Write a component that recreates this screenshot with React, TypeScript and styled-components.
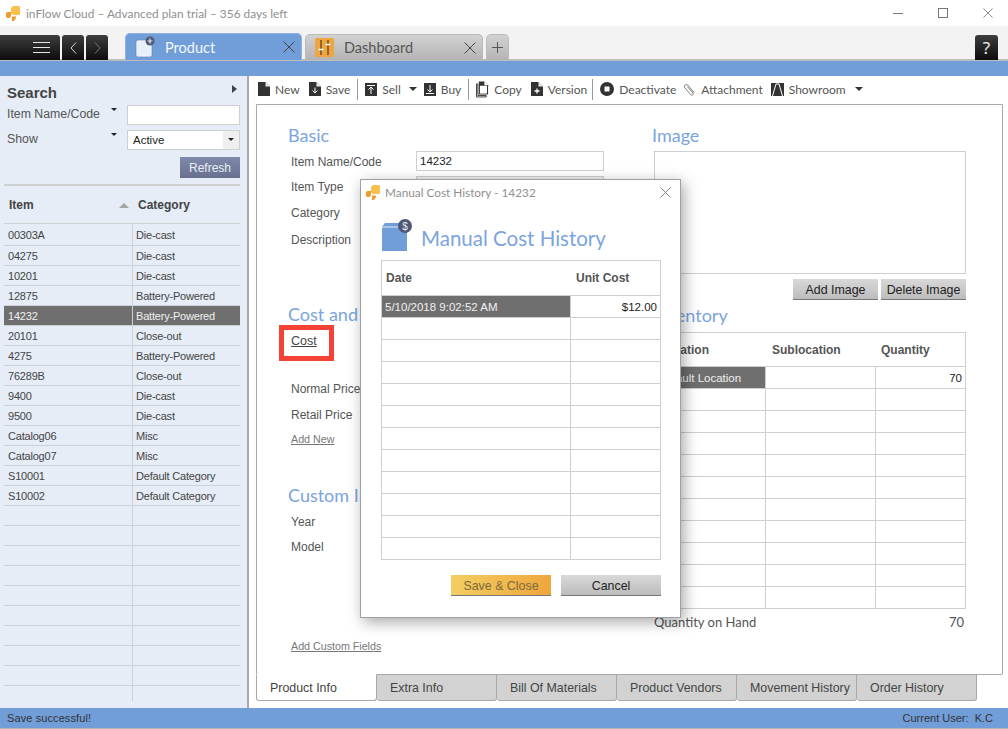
import React from "react";
import styled, { createGlobalStyle } from "styled-components";

const Global = createGlobalStyle`
  html, body { margin: 0; padding: 0; background: #fff; }
  *, *::before, *::after { box-sizing: border-box; }
  body { font-family: "Liberation Sans", Arial, sans-serif; }
`;

const UI = `"Lato", "Noto Sans", sans-serif`;

const AppFrame = styled.div`
  position: relative; width: 1008px; height: 729px; overflow: hidden;
  display: flex; flex-direction: column; background: #fff; color: #444;
`;

/* ---------- title bar ---------- */
const TitleBar = styled.header`
  height: 26px; flex: none; display: flex; align-items: center; padding-left: 6px;
  background: #fff;
`;
const TitleText = styled.span`
  margin-left: 6px; font: 11.9px ${UI}; color: #8f8f8f; white-space: nowrap;
`;
const WindowControls = styled.div`
  margin-left: auto; display: flex; align-items: center; padding-right: 15px; gap: 35px; color: #777;
`;

/* ---------- tab strip ---------- */
const TabStrip = styled.nav`
  height: 35px; flex: none; display: flex; align-items: flex-end; background: #f3f3f3;
  border-bottom: 2px solid #bdbdbd; padding-top: 9px;
`;
const DarkButton = styled.button<{ $w: number; $ml?: number; $dim?: boolean }>`
  width: ${(p) => p.$w}px; height: 25px; margin-left: ${(p) => p.$ml ?? 2}px; margin-bottom: -1px;
  border: 0; padding: 0; border-radius: 3px 3px 0 0;
  background: linear-gradient(#3d3d3d, #0d0d0d);
  color: ${(p) => (p.$dim ? "#777" : "#ddd")};
  display: flex; align-items: center; justify-content: center;
  font: 18px "Noto Sans", sans-serif;
`;
const MenuButton = styled(DarkButton)`
  justify-content: flex-end; padding-right: 10px; border-radius: 0 3px 0 0;
`;
const DocTab = styled.div<{ $active?: boolean; $w: number; $ml: number }>`
  width: ${(p) => p.$w}px; height: ${(p) => (p.$active ? 27 : 26)}px; margin-left: ${(p) => p.$ml}px;
  margin-bottom: -1px; flex: none; position: relative; z-index: 1;
  display: flex; align-items: center; padding-left: 9px;
  border-radius: 5px 5px 0 0; border: 1px solid ${(p) => (p.$active ? "#8fb2e0" : "#bbb")};
  border-bottom: 0;
  background: ${(p) => (p.$active ? "#719ed9" : "linear-gradient(#d2d2d2, #b4b4b4)")};
  color: ${(p) => (p.$active ? "#f4f8ff" : "#555")};
  font: 14.5px ${UI};
`;
const DocTabLabel = styled.span<{ $gap: number }>` margin-left: ${(p) => p.$gap}px; `;
const DocTabClose = styled.span`
  margin-left: auto; margin-right: 6px; display: flex; color: #444;
`;
const PlusTab = styled(DocTab)`
  padding: 0; justify-content: center; color: #555;
`;
const HelpButton = styled(DarkButton)`
  margin-left: auto; margin-right: 10px; font-size: 17px; color: #eee;
`;

const BlueBand = styled.div` height: 15px; flex: none; background: #719ed9; `;

/* ---------- main ---------- */
const Main = styled.div` flex: 1; min-height: 0; display: flex; `;

const Sidebar = styled.aside`
  width: 249px; flex: none; background: #e6edf7; border-right: 2px solid #a9a9a9;
  display: flex; flex-direction: column; padding: 0 7px 0 4px; position: relative;
`;
const SearchHead = styled.div`
  height: 26px; display: flex; align-items: flex-end; justify-content: space-between; padding: 0 0 1px 3px;
  font: bold 15px "Liberation Sans", sans-serif; color: #444;
`;
const CollapseArrow = styled.span`
  position: absolute; right: 10px; top: 9px; width: 0; height: 0;
  border-left: 5px solid #444; border-top: 4.5px solid transparent; border-bottom: 4.5px solid transparent;
`;
const SearchRow = styled.div`
  height: 25px; display: flex; align-items: center; padding-left: 3px;
  font-size: 12.3px; color: #555;
`;
const SearchLabel = styled.span`
  width: 120px; flex: none; position: relative; margin-top: -2px;
`;
const TinyCaret = styled.i`
  position: absolute; left: 104px; top: 1px; width: 0; height: 0;
  border-top: 3px solid #222; border-left: 3px solid transparent; border-right: 3px solid transparent;
`;
const FieldBox = styled.div`
  width: 113px; height: 20px; background: #fff; border: 1px solid #cfcfcf;
  display: flex; align-items: center; padding-left: 5px; color: #222; font-size: 11.5px;
`;
const SelectCaret = styled.span`
  margin-left: auto; width: 16px; height: 100%; background: #efefef;
  display: flex; align-items: center; justify-content: center;
  &::after { content: ""; border-top: 3px solid #222; border-left: 3px solid transparent; border-right: 3px solid transparent; }
`;
const RefreshRow = styled.div` display: flex; justify-content: flex-end; margin-top: 5px; `;
const RefreshButton = styled.button`
  width: 60px; height: 21px; border: 0; padding: 0;
  background: linear-gradient(#8089a9, #67708f); color: #e9edf6;
  font: 12px "Liberation Sans", sans-serif;
`;
const SideRule = styled.div` height: 2px; background: #cfd0d2; margin-top: 6px; `;
const SideHeader = styled.div`
  height: 38px; display: grid; grid-template-columns: 128px 1fr; align-items: center;
  border-bottom: 1px solid #cfd0d2; font: bold 12px "Liberation Sans", sans-serif; color: #444;
`;
const SortCell = styled.span`
  position: relative; padding-left: 5px;
  &::after {
    content: ""; position: absolute; right: 3px; top: 5px;
    border-bottom: 5px solid #a5a5a5; border-left: 5px solid transparent; border-right: 5px solid transparent;
  }
`;
const CatHeadCell = styled.span` padding-left: 6px; `;
const SideRow = styled.div<{ $first?: boolean; $selected?: boolean }>`
  height: ${(p) => (p.$first ? 22 : 20)}px; display: grid; grid-template-columns: 128px 1fr; align-items: center;
  border-bottom: 1px solid #cfd0d2; font-size: 11px; letter-spacing: -0.2px;
  background: ${(p) => (p.$selected ? "#6f6f6f" : "transparent")};
  color: ${(p) => (p.$selected ? "#f0f0f0" : "#444")};
`;
const SideCell = styled.span<{ $cat?: boolean }>`
  height: 100%; display: flex; align-items: center; padding-left: ${(p) => (p.$cat ? 3 : 4)}px;
  white-space: nowrap; ${(p) => (p.$cat ? "border-left: 1px solid #cfd0d2;" : "")}
`;
const SideTail = styled.div`
  height: 15px; width: 129px; border-right: 1px solid #cfd0d2;
`;

/* ---------- content ---------- */
const Content = styled.section`
  flex: 1; min-width: 0; display: flex; flex-direction: column; padding: 0 5px 0 7px; background: #fff;
`;
const Toolbar = styled.div`
  height: 28px; flex: none; display: flex; align-items: center; padding: 0 0 2px 2px;
  font: 12px ${UI}; color: #555;
`;
const ToolItem = styled.span<{ $mr?: number }>`
  display: inline-flex; align-items: center; gap: 5px; margin-right: ${(p) => p.$mr ?? 9}px; white-space: nowrap;
`;
const ToolSep = styled.span` width: 1px; height: 21px; background: #999; margin: 0 7px 0 -2px; `;
const ToolCaret = styled.i`
  display: inline-block; margin-right: 7px;
  border-top: 4px solid #333; border-left: 4px solid transparent; border-right: 4px solid transparent;
`;

const Panel = styled.div`
  height: 571px; flex: none; border: 1px solid #a9a9a9; border-radius: 0 0 2px 2px;
  display: grid; grid-template-columns: 366px 312px; padding: 20px 0 0 31px; background: #fff;
`;
const Column = styled.div` display: flex; flex-direction: column; position: relative; `;

const SectionTitle = styled.h2<{ $mt?: number; $ml?: number }>`
  margin: ${(p) => p.$mt ?? 0}px 0 0 ${(p) => p.$ml ?? 0}px; height: 22px;
  font: 400 18px/20px ${UI}; color: #7ba4de; white-space: nowrap;
`;
const FormRow = styled.div<{ $h?: number; $mt?: number }>`
  height: ${(p) => p.$h ?? 26}px; margin-top: ${(p) => p.$mt ?? 0}px; padding-left: 3px;
  display: flex; align-items: center; font-size: 12px; color: #555; position: relative;
`;
const FormLabel = styled.span` width: 125px; flex: none; white-space: nowrap; padding-top: 2px; `;
const TextField = styled.div`
  width: 188px; height: 20px; border: 1px solid #cfcfcf; background: #fff;
  display: flex; align-items: center; padding-left: 3px; font-size: 11.5px; color: #222;
`;
const SelectField = styled(TextField)` background: #ededed; `;
const CostLink = styled.a`
  position: relative; color: #444; text-decoration: underline; font-size: 12.5px;
  &::before {
    content: ""; position: absolute; left: -12px; top: -9px; width: 55px; height: 36px;
    border: 5px solid #f44336;
  }
`;
const SmallLink = styled.a`
  font-size: 10.7px; color: #777; text-decoration: underline; white-space: nowrap;
`;

const ImageBox = styled.div`
  margin-top: 4px; height: 123px; border: 1px solid #cfcfcf; background: #fff;
`;
const ImageActions = styled.div` margin-top: 5px; display: flex; justify-content: flex-end; gap: 3px; `;
const GreyButton = styled.button<{ $w: number; $h?: number }>`
  width: ${(p) => p.$w}px; height: ${(p) => p.$h ?? 21}px; padding: 1px 0 0; border: 0;
  border-bottom: 1px solid #777; background: linear-gradient(#d9d9d9, #bcbcbc);
  font: 12.4px "Liberation Sans", sans-serif; color: #222;
`;
const SaveButton = styled(GreyButton)`
  background: linear-gradient(100deg, #f3cf62, #eea63d); color: #7b6a3c;
`;

const Grid = styled.div<{ $mt?: number }>`
  margin-top: ${(p) => p.$mt ?? 0}px; border: 1px solid #cfcfcf; border-bottom: 0; background: #fff;
`;
const GridRow = styled.div<{ $cols: string; $h: number }>`
  height: ${(p) => p.$h}px; display: grid; grid-template-columns: ${(p) => p.$cols};
  border-bottom: 1px solid #cfcfcf; font-size: 11.5px;
`;
const HeadCell = styled.div<{ $pl?: number }>`
  display: flex; align-items: center; padding-left: ${(p) => p.$pl ?? 4}px;
  font-weight: bold; font-size: 12px; color: #555; white-space: nowrap;
`;
const DataCell = styled.div<{ $selected?: boolean; $right?: boolean }>`
  display: flex; align-items: center; padding: 0 3px; white-space: nowrap; overflow: hidden;
  justify-content: ${(p) => (p.$right ? "flex-end" : "flex-start")};
  background: ${(p) => (p.$selected ? "#6f6f6f" : "transparent")};
  color: ${(p) => (p.$selected ? "#f0f0f0" : "#222")};
  & + & { border-left: 1px solid #cfcfcf; }
`;
const QohRow = styled.div`
  margin-top: 4px; height: 18px; display: flex; justify-content: space-between; align-items: center;
  padding-right: 2px; font: 13px ${UI}; color: #555;
`;

const BottomTabs = styled.div` display: flex; flex: none; height: 27px; margin-top: -1px; position: relative; `;
const BottomTab = styled.div<{ $active?: boolean; $w?: number }>`
  width: ${(p) => p.$w ?? 120}px; height: 27px; padding: 0 0 0 13px; display: flex; align-items: center;
  border: 1px solid #a9a9a9; border-left: ${(p) => (p.$active ? "1px solid #a9a9a9" : "0")};
  border-top: 1px solid ${(p) => (p.$active ? "#fff" : "#a9a9a9")};
  border-radius: 0 0 3px 3px;
  background: ${(p) => (p.$active ? "#fff" : "#d2d2d2")};
  font: 12.4px "Liberation Sans", sans-serif; color: #444; white-space: nowrap;
`;

const StatusBar = styled.footer`
  height: 21px; flex: none; background: #719ed9; border-bottom: 1px solid #b5b5b5;
  display: flex; align-items: center; justify-content: space-between; padding: 0 15px 0 7px;
  font-size: 11px; color: #333;
`;
const StatusMessage = styled.span` letter-spacing: .1px; `;

/* ---------- modal ---------- */
const Modal = styled.div`
  position: absolute; left: 360px; top: 179px; width: 321px; height: 439px; z-index: 5;
  background: #fff; border: 1px solid #a0a0a0; box-shadow: 3px 4px 14px rgba(0,0,0,.35);
  display: flex; flex-direction: column; padding: 0 19px 0 20px;
`;
const ModalTitleBar = styled.div`
  height: 24px; margin: 0 -10px 0 -15px; display: flex; align-items: center;
  font: 11.8px ${UI}; color: #8f8f8f;
`;
const ModalTitleText = styled.span` margin-left: 5px; `;
const ModalClose = styled.span` margin-left: auto; display: flex; color: #777; `;
const ModalHeading = styled.div`
  margin-top: 15px; height: 32px; display: flex; align-items: center; gap: 9px;
  font: 400 20.5px ${UI}; color: #7ba4de; white-space: nowrap;
`;
const ModalHeadingText = styled.span` margin-top: 5px; `;
const ModalActions = styled.div` margin-top: 15px; display: flex; justify-content: flex-end; gap: 10px; `;

/* ---------- drawn icons ---------- */
const Logo = ({ s = 15 }: { s?: number }) => (
  <svg width={s * 14 / 15} height={s} viewBox="0 0 14 15">
    <path d="M5 2 7 0h5.500A1.500 1.500 0 0 1 14 1.500V8l-1 1H7L5 7.500z" fill="#f8c14d" />
    <path d="M0 7.500 1 6h4v4L3.500 12H1l-1-1z" fill="#f09a2f" />
    <path d="M6 10.500h4v1.500l-2 3H6z" fill="#f09a2f" />
  </svg>
);
const X = ({ s = 12, w = 1 }: { s?: number; w?: number }) => (
  <svg width={s} height={s} viewBox="0 0 12 12" fill="none" stroke="currentColor" strokeWidth={w}>
    <path d="M.5.500l11 11M11.500.500l-11 11" />
  </svg>
);
const ProductIcon = () => (
  <svg width="20" height="22" viewBox="0 0 20 22">
    <path d="M1 6a2 2 0 0 1 2-2h14v15a2 2 0 0 1-2 2H3a2 2 0 0 1-2-2z" fill="#eaf0fa" stroke="#5d83bb" strokeWidth=".6" />
    <circle cx="15" cy="5" r="4.500" fill="#4f5878" />
    <path d="M12.500 5h5M15 2.500v5" stroke="#e8e8e8" strokeWidth="1.200" />
  </svg>
);
const DashIcon = () => (
  <svg width="19" height="19" viewBox="0 0 19 19">
    <rect width="19" height="19" rx="1.500" fill="#f0a640" />
    <path d="M6 2v15M13 2v15" stroke="#5b4524" strokeWidth="1.300" />
    <path d="M3.500 11.500h5M10.500 6.500h5" stroke="#fff" strokeWidth="1.600" />
  </svg>
);
const Doc = ({ mark }: { mark?: "plus" | "down" }) => (
  <svg width="12" height="14" viewBox="0 0 12 14">
    <path d="M0 0h7.500L12 4.500V14H0z" fill="#333" />
    <path d="M7.500 0v4.500H12" fill="#fff" opacity=".9" />
    {mark === "plus" && <path d="M3.500 9h5M6 6.500v5" stroke="#fff" strokeWidth="1.300" />}
    {mark === "down" && <path d="M6 5.500V11M3.500 8.500 6 11l2.500-2.500" stroke="#fff" strokeWidth="1" fill="none" />}
  </svg>
);
const Arrow = ({ up }: { up?: boolean }) => (
  <svg width="12" height="13" viewBox="0 0 12 13">
    <rect width="12" height="13" fill="#333" />
    {up ? (
      <path d="M2 2.500h8M6 11V4M3.500 6.500 6 4l2.500 2.500" stroke="#fff" fill="none" />
    ) : (
      <path d="M2 10.500h8M6 2v7M3.500 6.500 6 9l2.500-2.500" stroke="#fff" fill="none" />
    )}
  </svg>
);
const CopyIcon = () => (
  <svg width="13" height="17" viewBox="0 0 14 17">
    <path d="M.5 2.500h1.500V15h9v1.500H.5z" fill="#fff" stroke="#333" />
    <path d="M3 0h6l4 4v10H3z" fill="#333" />
    <path d="M9 0v4h4" fill="#fff" />
    <rect x="4.200" y="4.500" width="7.600" height="8.400" fill="#fff" />
  </svg>
);
const StopIcon = () => (
  <svg width="14" height="14" viewBox="0 0 14 14">
    <circle cx="7" cy="7" r="7" fill="#333" />
    <rect x="4.500" y="4.500" width="5" height="5" fill="#fff" />
  </svg>
);
const ClipIcon = () => (
  <svg width="13" height="15" viewBox="0 0 14 15" fill="none" stroke="#777" strokeWidth="1">
    <path d="M12 11 5 2.500A2.200 2.200 0 0 0 1.800 5.300l6.700 8a1.500 1.500 0 0 0 2.300-1.900L4.800 4.500" />
  </svg>
);
const ShowroomIcon = () => (
  <svg width="13" height="13" viewBox="0 0 13 13">
    <rect width="13" height="13" fill="#333" />
    <path d="M1.500 13 5 1h3l3.500 12" stroke="#fff" fill="none" strokeWidth="1" />
  </svg>
);
const CostBoxIcon = () => (
  <svg width="31" height="32" viewBox="0 0 31 32">
    <path d="M1 7.500 4 4h22v28H1z" fill="#719ed9" />
    <path d="M1 8h24" stroke="#fff" strokeWidth=".8" />
    <circle cx="24" cy="7" r="7" fill="#4f5878" />
    <text x="24" y="10.500" fontSize="10" fill="#eee" textAnchor="middle" fontFamily="Liberation Sans">$</text>
  </svg>
);

/* ---------- data ---------- */
const items: [string, string][] = [
  ["00303A", "Die-cast"], ["04275", "Die-cast"], ["10201", "Die-cast"], ["12875", "Battery-Powered"],
  ["14232", "Battery-Powered"], ["20101", "Close-out"], ["4275", "Battery-Powered"], ["76289B", "Close-out"],
  ["9400", "Die-cast"], ["9500", "Die-cast"], ["Catalog06", "Misc"], ["Catalog07", "Misc"],
  ["S10001", "Default Category"], ["S10002", "Default Category"],
  ...Array.from({ length: 9 }, () => ["", ""] as [string, string]),
];
const tabs = ["Extra Info", "Bill Of Materials", "Product Vendors", "Movement History", "Order History"];
const invCols = "110px 110px 1fr";
const costCols = "188px 1fr";

export default function App() {
  return (
    <AppFrame>
      <Global />
      <TitleBar>
        <Logo />
        <TitleText>inFlow Cloud – Advanced plan trial – 356 days left</TitleText>
        <WindowControls>
          <svg width="10" height="10" viewBox="0 0 10 10" stroke="currentColor"><path d="M0 5.500h10" /></svg>
          <svg width="10" height="10" viewBox="0 0 10 10" stroke="currentColor" fill="none"><rect x=".5" y=".5" width="9" height="9" /></svg>
          <X s={10} />
        </WindowControls>
      </TitleBar>

      <TabStrip>
        <MenuButton $w={60} $ml={0}>
          <svg width="17" height="11" viewBox="0 0 17 11" stroke="#e5e5e5"><path d="M0 .5h17M0 5.500h17M0 10.500h17" /></svg>
        </MenuButton>
        <DarkButton $w={22}>
          <svg width="7" height="12" viewBox="0 0 7 12" fill="none" stroke="currentColor"><path d="M6 .5 1 6l5 5.500" /></svg>
        </DarkButton>
        <DarkButton $w={22} $dim>
          <svg width="7" height="12" viewBox="0 0 7 12" fill="none" stroke="currentColor"><path d="M1 .5 6 6l-5 5.500" /></svg>
        </DarkButton>
        <DocTab $active $w={177} $ml={17}>
          <ProductIcon />
          <DocTabLabel $gap={10}>Product</DocTabLabel>
          <DocTabClose><X /></DocTabClose>
        </DocTab>
        <DocTab $w={178} $ml={3}>
          <DashIcon />
          <DocTabLabel $gap={10}>Dashboard</DocTabLabel>
          <DocTabClose><X /></DocTabClose>
        </DocTab>
        <PlusTab $w={23} $ml={3}>
          <svg width="11" height="11" viewBox="0 0 11 11" stroke="currentColor"><path d="M0 5.500h11M5.500 0v11" /></svg>
        </PlusTab>
        <HelpButton $w={23}>?</HelpButton>
      </TabStrip>

      <BlueBand />

      <Main>
        <Sidebar>
          <SearchHead>Search</SearchHead>
          <CollapseArrow />
          <SearchRow>
            <SearchLabel>Item Name/Code<TinyCaret /></SearchLabel>
            <FieldBox />
          </SearchRow>
          <SearchRow>
            <SearchLabel>Show<TinyCaret /></SearchLabel>
            <FieldBox>Active<SelectCaret /></FieldBox>
          </SearchRow>
          <RefreshRow><RefreshButton>Refresh</RefreshButton></RefreshRow>
          <SideRule />
          <SideHeader>
            <SortCell>Item</SortCell>
            <CatHeadCell>Category</CatHeadCell>
          </SideHeader>
          {items.map(([id, cat], i) => (
            <SideRow key={i} $first={i === 0} $selected={id === "14232"}>
              <SideCell>{id}</SideCell>
              <SideCell $cat>{cat}</SideCell>
            </SideRow>
          ))}
          <SideTail />
        </Sidebar>

        <Content>
          <Toolbar>
            <ToolItem><Doc />New</ToolItem>
            <ToolItem><Doc mark="down" />Save</ToolItem>
            <ToolSep />
            <ToolItem $mr={8}><Arrow up />Sell</ToolItem>
            <ToolCaret />
            <ToolItem><Arrow />Buy</ToolItem>
            <ToolSep />
            <ToolItem><CopyIcon />Copy</ToolItem>
            <ToolItem $mr={7}><Doc mark="plus" />Version</ToolItem>
            <ToolSep />
            <ToolItem $mr={7}><StopIcon />Deactivate</ToolItem>
            <ToolItem $mr={8}><ClipIcon />Attachment</ToolItem>
            <ToolItem><ShowroomIcon />Showroom</ToolItem>
            <ToolCaret />
          </Toolbar>

          <Panel>
            <Column>
              <SectionTitle>Basic</SectionTitle>
              <FormRow $mt={1} $h={25}><FormLabel>Item Name/Code</FormLabel><TextField>14232</TextField></FormRow>
              <FormRow><FormLabel>Item Type</FormLabel><SelectField /></FormRow>
              <FormRow><FormLabel>Category</FormLabel></FormRow>
              <FormRow $mt={1}><FormLabel>Description</FormLabel></FormRow>
              <SectionTitle $mt={52}>Cost and Pricing</SectionTitle>
              <FormRow $mt={2}><CostLink>Cost</CostLink></FormRow>
              <FormRow $mt={21}><FormLabel>Normal Price</FormLabel></FormRow>
              <FormRow $h={25}><FormLabel>Retail Price</FormLabel></FormRow>
              <FormRow $h={25}><SmallLink>Add New</SmallLink></FormRow>
              <SectionTitle $mt={34}>Custom Information</SectionTitle>
              <FormRow $mt={1} $h={25}><FormLabel>Year</FormLabel></FormRow>
              <FormRow><FormLabel>Model</FormLabel></FormRow>
              <FormRow $h={20} $mt={77}><SmallLink>Add Custom Fields</SmallLink></FormRow>
            </Column>

            <Column>
              <SectionTitle $ml={-2}>Image</SectionTitle>
              <ImageBox />
              <ImageActions>
                <GreyButton $w={85}>Add Image</GreyButton>
                <GreyButton $w={85}>Delete Image</GreyButton>
              </ImageActions>
              <SectionTitle $mt={5} $ml={-2}>Inventory</SectionTitle>
              <Grid $mt={5}>
                <GridRow $cols={invCols} $h={34}>
                  <HeadCell>Location</HeadCell><HeadCell $pl={7}>Sublocation</HeadCell><HeadCell $pl={6}>Quantity</HeadCell>
                </GridRow>
                {Array.from({ length: 11 }, (_, i) => (
                  <GridRow key={i} $cols={invCols} $h={22}>
                    <DataCell $selected={i === 0}>{i === 0 ? "Default Location" : ""}</DataCell>
                    <DataCell />
                    <DataCell $right>{i === 0 ? "70" : ""}</DataCell>
                  </GridRow>
                ))}
              </Grid>
              <QohRow><span>Quantity on Hand</span><span>70</span></QohRow>
            </Column>
          </Panel>

          <BottomTabs>
            <BottomTab $active $w={121}>Product Info</BottomTab>
            {tabs.map((t) => <BottomTab key={t}>{t}</BottomTab>)}
          </BottomTabs>
        </Content>
      </Main>

      <StatusBar>
        <StatusMessage>Save successful!</StatusMessage>
        <span>Current User:&nbsp; K.C</span>
      </StatusBar>

      <Modal>
        <ModalTitleBar>
          <Logo s={15} />
          <ModalTitleText>Manual Cost History - 14232</ModalTitleText>
          <ModalClose><X s={11} /></ModalClose>
        </ModalTitleBar>
        <ModalHeading><CostBoxIcon /><ModalHeadingText>Manual Cost History</ModalHeadingText></ModalHeading>
        <Grid $mt={9}>
          <GridRow $cols={costCols} $h={35}>
            <HeadCell>Date</HeadCell><HeadCell $pl={6}>Unit Cost</HeadCell>
          </GridRow>
          {Array.from({ length: 12 }, (_, i) => (
            <GridRow key={i} $cols={costCols} $h={22}>
              <DataCell $selected={i === 0}>{i === 0 ? "5/10/2018 9:02:52 AM" : ""}</DataCell>
              <DataCell $right>{i === 0 ? "$12.00" : ""}</DataCell>
            </GridRow>
          ))}
        </Grid>
        <ModalActions>
          <SaveButton $w={100}>Save &amp; Close</SaveButton>
          <GreyButton $w={100}>Cancel</GreyButton>
        </ModalActions>
      </Modal>
    </AppFrame>
  );
}
